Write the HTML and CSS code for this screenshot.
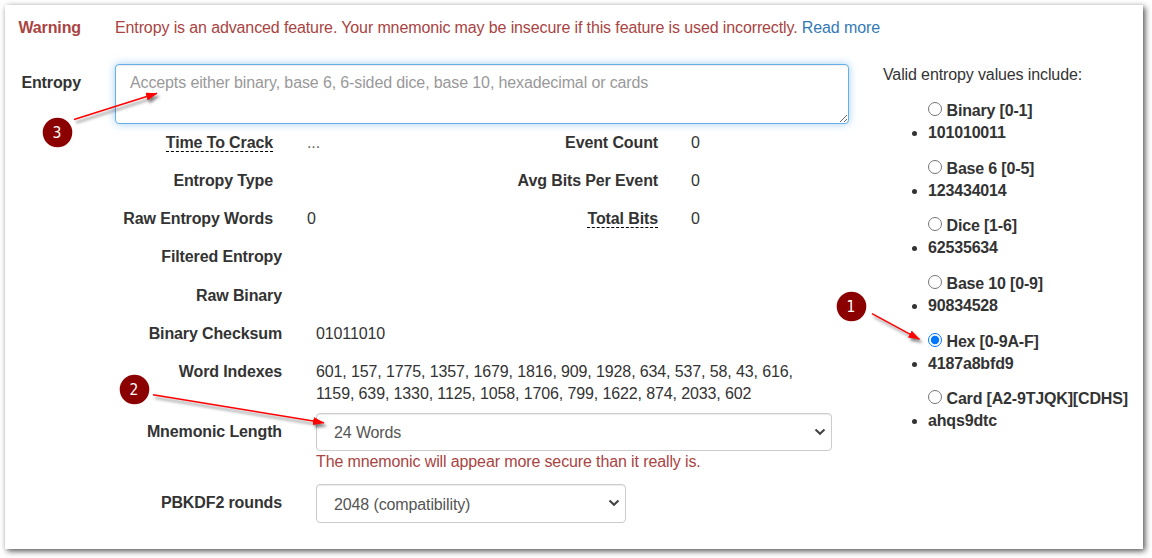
FILE: index.html
```html
<!DOCTYPE html>
<html lang="en">
<head>
<meta charset="utf-8">
<title>Entropy</title>
<link rel="stylesheet" href="styles.css">
</head>
<body>
<main class="panel">
  <div class="label danger">Warning</div>
  <p class="warning danger">Entropy is an advanced feature. Your mnemonic may be insecure if this feature is used incorrectly. <a class="link">Read more</a></p>

  <label class="label entropy-label" for="entropy">Entropy</label>
  <section class="main">
    <textarea id="entropy" class="control entropy" placeholder="Accepts either binary, base 6, 6-sided dice, base 10, hexadecimal or cards"></textarea>
    <div class="stats">
      <div class="name"><span class="hint">Time To Crack</span></div><div class="dots">...</div>
      <div class="name">Event Count</div><div>0</div>
      <div class="name">Entropy Type</div><div></div>
      <div class="name">Avg Bits Per Event</div><div>0</div>
      <div class="name">Raw Entropy Words</div><div>0</div>
      <div class="name"><span class="hint">Total Bits</span></div><div>0</div>
    </div>
    <div class="details">
      <div class="name">Filtered Entropy</div><div></div>
      <div class="name">Raw Binary</div><div></div>
      <div class="name">Binary Checksum</div><div>01011010</div>
      <div class="name">Word Indexes</div>
      <div>601, 157, 1775, 1357, 1679, 1816, 909, 1928, 634, 537, 58, 43, 616,<br>1159, 639, 1330, 1125, 1058, 1706, 799, 1622, 874, 2033, 602</div>
      <label class="name field-name" for="length">Mnemonic Length</label>
      <div>
        <div class="picker">
          <select id="length" class="control"><option>24 Words</option></select>
          <svg class="chevron" viewBox="0 0 12 8"><path d="M1.5 1.5 6 5.7 10.5 1.5"/></svg>
        </div>
        <p class="note danger">The mnemonic will appear more secure than it really is.</p>
      </div>
      <label class="name field-name" for="rounds">PBKDF2 rounds</label>
      <div class="picker short">
        <select id="rounds" class="control"><option>2048 (compatibility)</option></select>
        <svg class="chevron" viewBox="0 0 12 8"><path d="M1.5 1.5 6 5.7 10.5 1.5"/></svg>
      </div>
    </div>
  </section>

  <aside class="side">
    <p>Valid entropy values include:</p>
    <ul class="types">
      <li><label><input type="radio" name="type">Binary [0-1]</label><span class="sample">101010011</span></li>
      <li><label><input type="radio" name="type">Base 6 [0-5]</label><span class="sample">123434014</span></li>
      <li><label><input type="radio" name="type">Dice [1-6]</label><span class="sample">62535634</span></li>
      <li><label><input type="radio" name="type">Base 10 [0-9]</label><span class="sample">90834528</span></li>
      <li><label><input type="radio" name="type" checked>Hex [0-9A-F]</label><span class="sample">4187a8bfd9</span></li>
      <li><label><input type="radio" name="type">Card [A2-9TJQK][CDHS]</label><span class="sample">ahqs9dtc</span></li>
    </ul>
  </aside>
</main>

<svg class="callouts" viewBox="0 0 1152 558">
  <defs>
    <marker id="head" markerUnits="userSpaceOnUse" markerWidth="12" markerHeight="8" refX="11" refY="4" orient="auto">
      <path class="tip" d="M0 0 11.5 4 0 8Z"/>
    </marker>
  </defs>
  <g class="arrows">
    <path d="M872 313.7 919.5 339.3" marker-end="url(#head)"/>
    <path d="M153 394.7 324 422.8" marker-end="url(#head)"/>
    <path d="M74 119.5 157 93.3" marker-end="url(#head)"/>
  </g>
  <g class="badges">
    <circle cx="851.5" cy="306.5" r="14.8"/><text x="851" y="312">1</text>
    <circle cx="134.5" cy="389.5" r="14.8"/><text x="134" y="395">2</text>
    <circle cx="57.5" cy="132.5" r="14.8"/><text x="57" y="138">3</text>
  </g>
</svg>
</body>
</html>
```
FILE: styles.css
```css
* { box-sizing: border-box; }
body {
  margin: 0;
  padding: 5px 9px 9px 5px;
  background: #fff;
  color: #333;
  font: 16px/22px "Liberation Sans", Arial, sans-serif;
  letter-spacing: -.12px;
  overflow: hidden;
}
p { margin: 0; }
.panel {
  display: grid;
  grid-template-columns: 76px 734px 1fr;
  grid-template-rows: 47px 1fr;
  column-gap: 34px;
  height: 544px;
  padding-top: 12px;
  background: #fff;
  box-shadow: 2px 2px 6px rgba(0, 0, 0, .7);
}
.label { font-weight: bold; text-align: right; }
.entropy-label { padding-top: 8px; }
.danger { color: #a94442; }
.warning { grid-column: 2 / 4; }
.link { color: #337ab7; }
.control {
  display: block;
  width: 100%;
  margin: 0;
  border: 1px solid #ccc;
  border-radius: 4px;
  background: #fff;
  color: #555;
  font: inherit;
  letter-spacing: inherit;
  box-shadow: inset 0 1px 1px rgba(0, 0, 0, .075);
}
.entropy {
  height: 60px;
  padding: 7px 14px;
  border-color: #66afe9;
  outline: 0;
  box-shadow: inset 0 1px 1px rgba(0, 0, 0, .075), 0 0 8px rgba(102, 175, 233, .6);
}
.entropy::placeholder { color: #999; }
.name { font-weight: bold; text-align: right; }
.hint { display: inline-block; height: 20px; border-bottom: 1px dashed #000; }
.stats {
  display: grid;
  grid-template-columns: 158px 192px 193px 1fr;
  grid-auto-rows: 38px;
  padding-top: 8px;
}
.stats > :nth-child(even) { padding-left: 34px; }
.stats > :nth-child(4n) { padding-left: 33px; }
.dots { color: #666; }
.details {
  display: grid;
  grid-template-columns: 167px 516px;
  grid-template-rows: 39px 38px 38px 52px 71px 39px;
  column-gap: 34px;
}
.field-name { padding-top: 8px; }
.picker { position: relative; height: 38px; }
.short { width: 310px; height: 39px; }
.picker .control { height: 100%; padding: 2px 17px 0; appearance: none; }
.chevron {
  position: absolute;
  right: 6.5px;
  top: 15px;
  width: 12px;
  height: 8px;
  fill: none;
  stroke: #444;
  stroke-width: 2.1;
}
.types { margin: 14px 0 0; padding: 0 0 0 45px; list-style: none; font-weight: bold; letter-spacing: -.17px; }
.types li { height: 57.7px; }
.types label { display: flex; align-items: flex-start; gap: 4.5px; height: 22px; white-space: nowrap; }
.types input { width: 14px; height: 14px; margin: 2px 0 0; accent-color: #0075ff; }
.sample { display: flex; align-items: center; }
.sample::before { content: ""; width: 5px; height: 5px; margin: 1px 11px 0 -16px; border-radius: 50%; background: #333; }
.callouts { position: absolute; left: 0; top: 0; width: 1152px; height: 558px; letter-spacing: 0; pointer-events: none; }
.arrows { fill: none; stroke: #f00; stroke-width: 1.5; filter: drop-shadow(2px 3px 1.5px rgba(0, 0, 0, .5)); }
.tip { fill: #f00; stroke: none; }
.badges { fill: #8b0000; }
.badges text { fill: #fff; font: 15.5px "DejaVu Sans Condensed", "DejaVu Sans", sans-serif; text-anchor: middle; }
```
